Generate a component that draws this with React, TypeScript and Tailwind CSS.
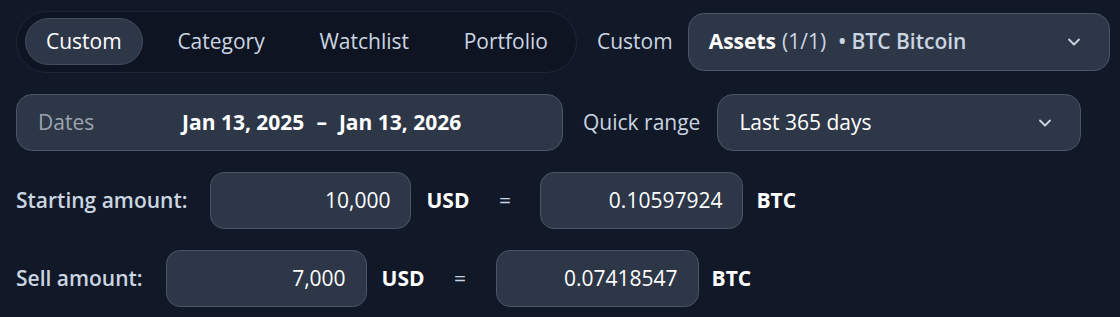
import React, { useState } from 'react';

const tabs = ['Custom', 'Category', 'Watchlist', 'Portfolio'];

const Chevron: React.FC = () => (
  <svg width="20" height="20" viewBox="0 0 24 24" fill="none" stroke="currentColor" strokeWidth="2.2" strokeLinecap="round" strokeLinejoin="round">
    <path d="M6 9l6 6 6-6" />
  </svg>
);

interface AmountRowProps {
  label: string;
  usd: string;
  btc: string;
}

const AmountRow: React.FC<AmountRowProps> = ({ label, usd, btc }) => (
  <div className="flex items-center h-[57px]">
    <span className="font-semibold text-[#cbd5e1] mr-[23px]">{label}</span>
    <div className="w-[201px] h-full rounded-[14px] bg-[#2d3748] border border-[#4a5568] flex items-center justify-end pr-[20px] text-white">
      {usd}
    </div>
    <span className="ml-[15px] font-bold text-white">USD</span>
    <span className="w-[71px] text-center text-[#cbd5e1]">=</span>
    <div className="w-[203px] h-full rounded-[14px] bg-[#2d3748] border border-[#4a5568] flex items-center justify-end pr-[20px] text-white">
      {btc}
    </div>
    <span className="ml-[13px] font-bold text-white">BTC</span>
  </div>
);

export default function App() {
  const [active, setActive] = useState('Custom');

  return (
    <div className="w-[1120px] h-[317px] bg-[#111827] pt-[10px] px-4 flex flex-col gap-[21px] text-[21px] font-['Open_Sans',sans-serif] overflow-hidden">
      {/* scope tabs + asset picker */}
      <div className="flex items-center h-[63px]">
        <div className="shrink-0 w-[561px] h-[62px] rounded-full border border-[#1f2636] bg-[#0e1421] flex items-center justify-between px-[8px]">
          {tabs.map((t) => (
            <button
              key={t}
              onClick={() => setActive(t)}
              className={`h-[47px] px-[20px] rounded-full ${
                active === t ? 'bg-[#2d3748] border border-[#434d5f] text-white' : 'text-[#cbd5e1]'
              }`}
            >
              {t}
            </button>
          ))}
        </div>
        <span className="shrink-0 ml-[20px] text-[#cbd5e1]">Custom</span>
        <div className="shrink-0 ml-[15px] w-[422px] h-[58px] rounded-[16px] bg-[#2d3748] border border-[#4a5568] flex items-center pl-[20px] pr-[25px]">
          <span className="font-bold text-white">Assets</span>
          <span className="ml-[6px] text-[#cbd5e1]">(1/1)</span>
          <span className="ml-[12px] font-semibold text-[#cbd5e1]">• BTC Bitcoin</span>
          <span className="ml-auto text-[#cbd5e1]"><Chevron /></span>
        </div>
      </div>

      {/* date range */}
      <div className="flex items-center h-[57px]">
        <div className="shrink-0 w-[547px] h-full rounded-[16px] bg-[#2d3748] border border-[#4a5568] flex items-center pl-[21px]">
          <span className="w-[144px] text-[#9ca3af]">Dates</span>
          <span className="font-bold text-white">Jan 13, 2025</span>
          <span className="mx-[12px] font-bold text-white">–</span>
          <span className="font-bold text-white">Jan 13, 2026</span>
        </div>
        <span className="shrink-0 ml-[20px] text-[#cbd5e1]">Quick range</span>
        <div className="shrink-0 ml-[17px] w-[364px] h-full rounded-[16px] bg-[#2d3748] border border-[#4a5568] flex items-center pl-[21px] pr-[25px]">
          <span className="text-white">Last 365 days</span>
          <span className="ml-auto text-[#cbd5e1]"><Chevron /></span>
        </div>
      </div>

      <AmountRow label="Starting amount:" usd="10,000" btc="0.10597924" />
      <AmountRow label="Sell amount:" usd="7,000" btc="0.07418547" />
    </div>
  );
}
